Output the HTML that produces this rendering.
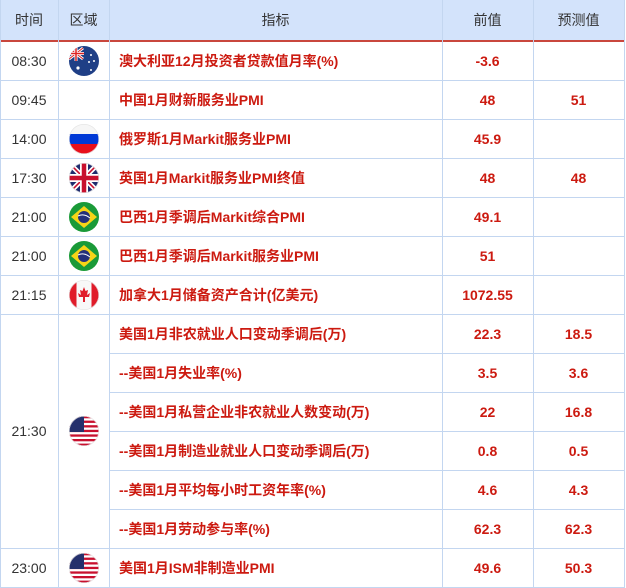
<!DOCTYPE html>
<html><head><meta charset="utf-8"><style>
body{margin:0;width:626px;height:588px;background:#fff;font-family:"Liberation Sans","Noto Sans CJK SC",sans-serif;position:relative;overflow:hidden}
.h{position:absolute;left:0;top:0;width:625px;height:40px;background:#d3e3fb;border-bottom:2px solid #c9473d}
.c{position:absolute;display:flex;align-items:center;justify-content:center;font-size:14px;box-sizing:border-box}
.hl{position:absolute;left:0;width:625px;height:1px;background:#c3d6f0}
.vl{position:absolute;width:1px;background:#c3d6f0}
.t{color:#333}
.r{color:#cc1a10;font-weight:bold}
.l{justify-content:flex-start;padding-left:10px}
.f{position:absolute;left:69px;width:30px;height:30px}
</style></head><body>
<div class="h"></div>
<div class="c t" style="left:0;top:0;width:58px;height:40px">时间</div>
<div class="c t" style="left:58px;top:0;width:51px;height:40px">区域</div>
<div class="c t" style="left:109px;top:0;width:333px;height:40px">指标</div>
<div class="c t" style="left:442px;top:0;width:91px;height:40px">前值</div>
<div class="c t" style="left:533px;top:0;width:91px;height:40px">预测值</div>
<div class="vl" style="left:58px;top:0;height:588px"></div>
<div class="vl" style="left:109px;top:0;height:588px"></div>
<div class="vl" style="left:442px;top:0;height:588px"></div>
<div class="vl" style="left:533px;top:0;height:588px"></div>
<div class="vl" style="left:624px;top:0;height:588px"></div>
<div class="vl" style="left:0;top:0;height:588px"></div>
<div class="hl" style="top:80px"></div><div class="hl" style="top:119px"></div><div class="hl" style="top:158px"></div><div class="hl" style="top:197px"></div><div class="hl" style="top:236px"></div><div class="hl" style="top:275px"></div><div class="hl" style="top:314px"></div>
<div class="hl" style="top:353px;left:109px;width:516px"></div><div class="hl" style="top:392px;left:109px;width:516px"></div><div class="hl" style="top:431px;left:109px;width:516px"></div><div class="hl" style="top:470px;left:109px;width:516px"></div><div class="hl" style="top:509px;left:109px;width:516px"></div>
<div class="hl" style="top:548px"></div><div class="hl" style="top:587px"></div>

<div class="c t" style="left:0;top:41px;width:58px;height:39px">08:30</div>
<div class="c t" style="left:0;top:80px;width:58px;height:39px">09:45</div>
<div class="c t" style="left:0;top:119px;width:58px;height:39px">14:00</div>
<div class="c t" style="left:0;top:158px;width:58px;height:39px">17:30</div>
<div class="c t" style="left:0;top:197px;width:58px;height:39px">21:00</div>
<div class="c t" style="left:0;top:236px;width:58px;height:39px">21:00</div>
<div class="c t" style="left:0;top:275px;width:58px;height:39px">21:15</div>
<div class="c t" style="left:0;top:314px;width:58px;height:234px">21:30</div>
<div class="c t" style="left:0;top:548px;width:58px;height:39px">23:00</div>

<svg class="f" style="top:46px" viewBox="0 0 30 30"><clipPath id="c0"><circle cx="15" cy="15" r="15"/></clipPath><g clip-path="url(#c0)"><rect width="30" height="30" fill="#1f3f86"/><path d="M0 2L14 13M14 2L0 13" stroke="#fff" stroke-width="3"/><path d="M0 2L14 13M14 2L0 13" stroke="#d22" stroke-width="1"/><path d="M7 0V15M0 7.5H15" stroke="#fff" stroke-width="3"/><path d="M7 0V15M0 7.5H15" stroke="#d22" stroke-width="1.5"/></g><g fill="#fff"><circle cx="9" cy="22" r="1.6"/><circle cx="22" cy="9" r="1"/><circle cx="25" cy="15" r="1"/><circle cx="20" cy="16" r="1"/><circle cx="22" cy="24" r="1"/></g></svg>
<svg class="f" style="top:124px" viewBox="0 0 30 30"><clipPath id="c1"><circle cx="15" cy="15" r="15"/></clipPath><g clip-path="url(#c1)"><rect width="30" height="10" fill="#f6f6f6"/><rect y="10" width="30" height="10" fill="#0039d6"/><rect y="20" width="30" height="10" fill="#e8101c"/></g><circle cx="15" cy="15" r="14.7" fill="none" stroke="#e4e4e4" stroke-width="0.6"/></svg>
<svg class="f" style="top:163px" viewBox="0 0 30 30"><clipPath id="c2"><circle cx="15" cy="15" r="15"/></clipPath><g clip-path="url(#c2)"><rect width="30" height="30" fill="#1e2b6e"/><path d="M0 0L30 30M30 0L0 30" stroke="#fff" stroke-width="5"/><path d="M0 0L30 30M30 0L0 30" stroke="#c8102e" stroke-width="1.6"/><path d="M15 0V30M0 15H30" stroke="#fff" stroke-width="8"/><path d="M15 0V30M0 15H30" stroke="#c8102e" stroke-width="4.5"/></g><circle cx="15" cy="15" r="14.7" fill="none" stroke="#e4e4e4" stroke-width="0.6"/></svg>
<svg class="f" style="top:202px" viewBox="0 0 30 30"><circle cx="15" cy="15" r="15" fill="#1a9a38"/><path d="M15 4L28 15L15 26L2 15Z" fill="#f7d417"/><circle cx="15" cy="15" r="6" fill="#25307a"/><path d="M9 14Q15 11 21 16" stroke="#fff" stroke-width="1" fill="none"/></svg>
<svg class="f" style="top:241px" viewBox="0 0 30 30"><circle cx="15" cy="15" r="15" fill="#1a9a38"/><path d="M15 4L28 15L15 26L2 15Z" fill="#f7d417"/><circle cx="15" cy="15" r="6" fill="#25307a"/><path d="M9 14Q15 11 21 16" stroke="#fff" stroke-width="1" fill="none"/></svg>
<svg class="f" style="top:280px" viewBox="0 0 30 30"><clipPath id="c3"><circle cx="15" cy="15" r="15"/></clipPath><g clip-path="url(#c3)"><rect width="30" height="30" fill="#f8f8f8"/><rect width="7.5" height="30" fill="#e01c2a"/><rect x="22.5" width="7.5" height="30" fill="#e01c2a"/><path d="M15 7L16.5 11L19 10L18 15L21 13L20 17L16 17L16 22H14L14 17L10 17L9 13L12 15L11 10L13.5 11Z" fill="#e01c2a"/></g><circle cx="15" cy="15" r="14.7" fill="none" stroke="#e4e4e4" stroke-width="0.6"/></svg>
<svg class="f" style="top:416px" viewBox="0 0 30 30"><clipPath id="c4"><circle cx="15" cy="15" r="15"/></clipPath><g clip-path="url(#c4)"><rect width="30" height="30" fill="#fff"/><g fill="#c8102e"><rect y="0" width="30" height="2.3"/><rect y="4.6" width="30" height="2.3"/><rect y="9.2" width="30" height="2.3"/><rect y="13.8" width="30" height="2.3"/><rect y="18.4" width="30" height="2.3"/><rect y="23" width="30" height="2.3"/><rect y="27.6" width="30" height="2.4"/></g><rect width="15" height="16" fill="#25306c"/></g><circle cx="15" cy="15" r="14.7" fill="none" stroke="#e4e4e4" stroke-width="0.6"/></svg>
<svg class="f" style="top:553px" viewBox="0 0 30 30"><clipPath id="c5"><circle cx="15" cy="15" r="15"/></clipPath><g clip-path="url(#c5)"><rect width="30" height="30" fill="#fff"/><g fill="#c8102e"><rect y="0" width="30" height="2.3"/><rect y="4.6" width="30" height="2.3"/><rect y="9.2" width="30" height="2.3"/><rect y="13.8" width="30" height="2.3"/><rect y="18.4" width="30" height="2.3"/><rect y="23" width="30" height="2.3"/><rect y="27.6" width="30" height="2.4"/></g><rect width="15" height="16" fill="#25306c"/></g><circle cx="15" cy="15" r="14.7" fill="none" stroke="#e4e4e4" stroke-width="0.6"/></svg>

<div class="c r l" style="left:109px;top:41px;width:333px;height:39px">澳大利亚12月投资者贷款值月率(%)</div>
<div class="c r l" style="left:109px;top:80px;width:333px;height:39px">中国1月财新服务业PMI</div>
<div class="c r l" style="left:109px;top:119px;width:333px;height:39px">俄罗斯1月Markit服务业PMI</div>
<div class="c r l" style="left:109px;top:158px;width:333px;height:39px">英国1月Markit服务业PMI终值</div>
<div class="c r l" style="left:109px;top:197px;width:333px;height:39px">巴西1月季调后Markit综合PMI</div>
<div class="c r l" style="left:109px;top:236px;width:333px;height:39px">巴西1月季调后Markit服务业PMI</div>
<div class="c r l" style="left:109px;top:275px;width:333px;height:39px">加拿大1月储备资产合计(亿美元)</div>
<div class="c r l" style="left:109px;top:314px;width:333px;height:39px">美国1月非农就业人口变动季调后(万)</div>
<div class="c r l" style="left:109px;top:353px;width:333px;height:39px">--美国1月失业率(%)</div>
<div class="c r l" style="left:109px;top:392px;width:333px;height:39px">--美国1月私营企业非农就业人数变动(万)</div>
<div class="c r l" style="left:109px;top:431px;width:333px;height:39px">--美国1月制造业就业人口变动季调后(万)</div>
<div class="c r l" style="left:109px;top:470px;width:333px;height:39px">--美国1月平均每小时工资年率(%)</div>
<div class="c r l" style="left:109px;top:509px;width:333px;height:39px">--美国1月劳动参与率(%)</div>
<div class="c r l" style="left:109px;top:548px;width:333px;height:39px">美国1月ISM非制造业PMI</div>

<div class="c r" style="left:442px;top:41px;width:91px;height:39px">-3.6</div>
<div class="c r" style="left:442px;top:80px;width:91px;height:39px">48</div>
<div class="c r" style="left:442px;top:119px;width:91px;height:39px">45.9</div>
<div class="c r" style="left:442px;top:158px;width:91px;height:39px">48</div>
<div class="c r" style="left:442px;top:197px;width:91px;height:39px">49.1</div>
<div class="c r" style="left:442px;top:236px;width:91px;height:39px">51</div>
<div class="c r" style="left:442px;top:275px;width:91px;height:39px">1072.55</div>
<div class="c r" style="left:442px;top:314px;width:91px;height:39px">22.3</div>
<div class="c r" style="left:442px;top:353px;width:91px;height:39px">3.5</div>
<div class="c r" style="left:442px;top:392px;width:91px;height:39px">22</div>
<div class="c r" style="left:442px;top:431px;width:91px;height:39px">0.8</div>
<div class="c r" style="left:442px;top:470px;width:91px;height:39px">4.6</div>
<div class="c r" style="left:442px;top:509px;width:91px;height:39px">62.3</div>
<div class="c r" style="left:442px;top:548px;width:91px;height:39px">49.6</div>

<div class="c r" style="left:533px;top:80px;width:91px;height:39px">51</div>
<div class="c r" style="left:533px;top:158px;width:91px;height:39px">48</div>
<div class="c r" style="left:533px;top:314px;width:91px;height:39px">18.5</div>
<div class="c r" style="left:533px;top:353px;width:91px;height:39px">3.6</div>
<div class="c r" style="left:533px;top:392px;width:91px;height:39px">16.8</div>
<div class="c r" style="left:533px;top:431px;width:91px;height:39px">0.5</div>
<div class="c r" style="left:533px;top:470px;width:91px;height:39px">4.3</div>
<div class="c r" style="left:533px;top:509px;width:91px;height:39px">62.3</div>
<div class="c r" style="left:533px;top:548px;width:91px;height:39px">50.3</div>
</body></html>
